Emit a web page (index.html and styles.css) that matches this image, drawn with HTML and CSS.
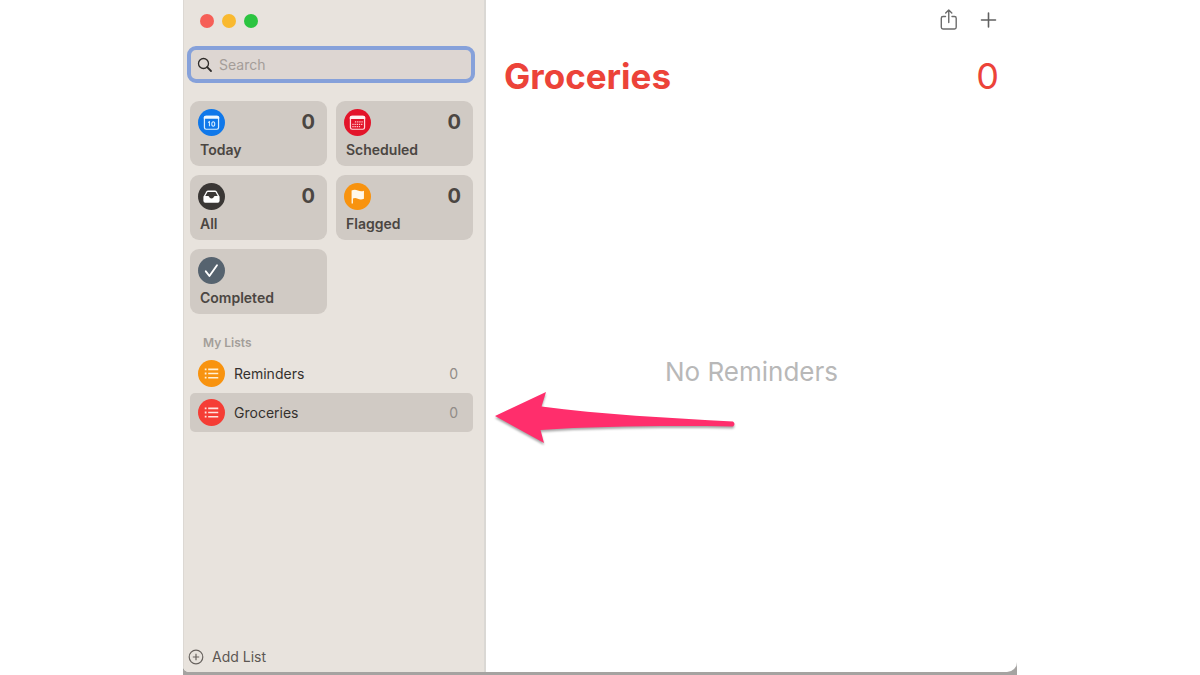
FILE: index.html
```
<!DOCTYPE html>
<html lang="en">
<head>
<meta charset="utf-8">
<title>Reminders</title>
<link rel="stylesheet" href="styles.css">
</head>
<body>
<div class="desktop">
<div class="window">
  <aside class="sidebar">
    <div class="lights">
      <button class="light light-close" aria-label="Close"></button>
      <button class="light light-min" aria-label="Minimize"></button>
      <button class="light light-zoom" aria-label="Zoom"></button>
    </div>
    <label class="search">
      <svg width="16" height="16" viewBox="0 0 16 16" fill="none" stroke="#2e2b29" aria-hidden="true"><circle cx="6.500" cy="6.500" r="5" stroke-width="1.300"/><path d="M10.200 10.200 14 14" stroke-width="1.800" stroke-linecap="round"/></svg>
      <input class="search-input" type="text" placeholder="Search" aria-label="Search">
    </label>
    <nav class="tiles">
      <button class="tile">
        <svg class="badge" viewBox="0 0 26 26" aria-hidden="true"><circle cx="13" cy="13" r="13" fill="#0f78ea"/><rect x="6.200" y="7" width="13.600" height="12.500" rx="1.600" fill="none" stroke="#d8eeff" stroke-width="1.200"/><path d="M5.600 9.500V8q0-1.600 1.600-1.600h11.600q1.600 0 1.600 1.600v1.500z" fill="#eef8ff"/><path d="M9.700 13l1.300-.8v4.500M14.700 12.300c-1.900 0-1.900 4.300 0 4.300s1.900-4.300 0-4.300z" fill="none" stroke="#d8eeff"/></svg>
        <span class="tile-count">0</span>
        <span class="tile-name">Today</span>
      </button>
      <button class="tile">
        <svg class="badge" viewBox="0 0 26 26" aria-hidden="true"><circle cx="13" cy="13" r="13" fill="#e3142a"/><rect x="6.200" y="7" width="13.600" height="12.500" rx="1.600" fill="none" stroke="#ffd9dc" stroke-width="1.200"/><path d="M5.600 9.600V8q0-1.600 1.600-1.600h11.600q1.600 0 1.600 1.600v1.600z" fill="#fff0f0"/><path d="M10.500 12.500h7.500M8 14.700h10M8 16.900h7.500" stroke="#ffc5ca" stroke-width="1.200" stroke-dasharray="1.300 .8"/></svg>
        <span class="tile-count">0</span>
        <span class="tile-name">Scheduled</span>
      </button>
      <button class="tile">
        <svg class="badge" viewBox="0 0 26 26" aria-hidden="true"><circle cx="13" cy="13" r="13" fill="#3a3735"/><path d="M5.200 13.200 8 8.200q.6-1 1.700-1h6.600q1.100 0 1.700 1l2.800 5v4q0 1.800-1.800 1.800H7q-1.800 0-1.800-1.800z" fill="#fff"/><path d="M7 12.400 9.200 8.700h7.600l2.200 3.700h-2.700q-.8 0-1 .9-.4 1.600-2.300 1.600t-2.300-1.600q-.2-.9-1-.9z" fill="#3a3735"/></svg>
        <span class="tile-count">0</span>
        <span class="tile-name">All</span>
      </button>
      <button class="tile">
        <svg class="badge" viewBox="0 0 26 26" aria-hidden="true"><circle cx="13" cy="13" r="13" fill="#f8930f"/><path d="M7.300 7.300q3-1.500 6 0 3 1.300 5.900.2v7.700q-3 1.200-5.900 0-2.600-1.200-4.700-.2v4.700H7.300z" fill="#fff8ea"/></svg>
        <span class="tile-count">0</span>
        <span class="tile-name">Flagged</span>
      </button>
      <button class="tile">
        <svg class="badge" viewBox="0 0 26 26" aria-hidden="true"><circle cx="13" cy="13" r="13" fill="#56636f"/><path d="M7.500 13.800 11 18.300 18.300 8" fill="none" stroke="#fff" stroke-width="1.800" stroke-linecap="round" stroke-linejoin="round"/></svg>
        <span class="tile-name">Completed</span>
      </button>
    </nav>
    <h2 class="lists-title">My Lists</h2>
    <nav class="lists">
      <button class="list">
        <svg class="badge" viewBox="0 0 26 26" aria-hidden="true"><circle cx="13" cy="13" r="13" fill="#f8930f"/><path d="M9.800 9h9.700M9.800 13h9.700M9.800 17h9.700" stroke="#fff0d5" stroke-width="1.500"/><path d="M6.500 9h1.700M6.500 13h1.700M6.500 17h1.700" stroke="#fff0d5" stroke-width="1.700"/></svg>
        <span class="list-name">Reminders</span>
        <span class="list-count">0</span>
      </button>
      <button class="list list-selected" aria-current="page">
        <svg class="badge" viewBox="0 0 26 26" aria-hidden="true"><circle cx="13" cy="13" r="13" fill="#f53d35"/><path d="M9.800 9h9.700M9.800 13h9.700M9.800 17h9.700" stroke="#ffe2de" stroke-width="1.500"/><path d="M6.500 9h1.700M6.500 13h1.700M6.500 17h1.700" stroke="#ffe2de" stroke-width="1.700"/></svg>
        <span class="list-name">Groceries</span>
        <span class="list-count">0</span>
      </button>
    </nav>
    <button class="add-list">
      <svg width="16" height="16" viewBox="0 0 16 16" fill="none" stroke="#68635f" stroke-width="1.200" aria-hidden="true"><circle cx="8" cy="8" r="6.800"/><path d="M8 4.800v6.400M4.800 8h6.400"/></svg>
      <span>Add List</span>
    </button>
  </aside>
  <main class="content">
    <div class="toolbar">
      <button class="tool" aria-label="Share"><svg width="20" height="24" viewBox="0 0 20 24" fill="none" stroke="#6c6c6c" stroke-width="1.400" stroke-linecap="round" stroke-linejoin="round" aria-hidden="true"><path d="M6.500 8.500H4q-1.700 0-1.700 1.700v9.100Q2.300 21 4 21h11.500q1.700 0 1.700-1.700v-9.100q0-1.700-1.700-1.700H13M9.750 14.500V2.200M6.700 5l3.050-3L12.800 5"/></svg></button>
      <button class="tool" aria-label="New reminder"><svg width="20" height="24" viewBox="0 0 20 24" fill="none" stroke="#606060" stroke-width="1.600" stroke-linecap="round" aria-hidden="true"><path d="M9.500 5v14M2.500 12h14"/></svg></button>
    </div>
    <header class="heading">
      <h1 class="title">Groceries</h1>
      <span class="total">0</span>
    </header>
    <p class="empty">No Reminders</p>
    <svg class="arrow" width="250" height="60" viewBox="0 0 250 60" aria-hidden="true"><path d="M5 29 56 5 51.500 19.500C110 27.500 180 31 243 34.500q3 2.500 0 5C180 38.500 110 39 50.500 43L54 56z" fill="#ff2e6c"/></svg>
  </main>
</div>
</div>
</body>
</html>
```
FILE: styles.css
```
* { box-sizing: border-box; }

body {
  margin: 0;
  background: #fff;
  font-family: Inter, "Liberation Sans", sans-serif;
  color: #4b4642;
}

button {
  border: 0;
  padding: 0;
  background: none;
  color: inherit;
  font: inherit;
  text-align: left;
}

.desktop {
  width: 69.5%;
  min-height: 100vh;
  margin: 0 auto;
  padding-bottom: 3px;
  display: flex;
  background: linear-gradient(#fff 96%, #a5a3a1 99%);
}

.window {
  flex: 1;
  display: grid;
  grid-template-columns: 303px 1fr;
  background: #fff;
  border-radius: 0 0 10px 6px;
  overflow: hidden;
}

.sidebar {
  display: flex;
  flex-direction: column;
  padding: 14px 11px 6px 6px;
  background: #e8e3dd;
  border-left: 1px solid #dcd8d3;
  border-right: 2px solid #dad8d4;
}

.lights {
  display: flex;
  gap: 8px;
  padding-left: 10px;
}

.light {
  width: 14px;
  height: 14px;
  border-radius: 50%;
}

.light-close { background: #f65f57; }
.light-min { background: #f9b92f; }
.light-zoom { background: #2bc440; }

.search {
  display: flex;
  align-items: center;
  gap: 6px;
  height: 37px;
  margin: 18px -2px 0 -3px;
  padding: 0 6px;
  border: 4px solid #86a1da;
  border-radius: 9px;
  background: #ddd6d2;
}

.search-input {
  flex: 1;
  min-width: 0;
  border: 0;
  padding: 0;
  outline: 0;
  background: none;
  font: 14px/20px Inter, "Liberation Sans", sans-serif;
}

.search-input::placeholder { color: #a49d99; }

.tiles {
  display: grid;
  grid-template-columns: 1fr 1fr;
  gap: 9px;
  margin-top: 18px;
}

.tile {
  display: grid;
  grid-template-columns: 1fr auto;
  align-content: start;
  row-gap: 5px;
  min-height: 65px;
  padding: 8px 12px 5px 8px;
  border-radius: 9px;
  background: #d0cac4;
}

.badge {
  display: block;
  width: 27px;
  height: 27px;
}

.tile-count {
  font-size: 20px;
  line-height: 27px;
  font-weight: 700;
}

.tile-name {
  grid-column: 1 / -1;
  padding-left: 2px;
  font-size: 14px;
  line-height: 18px;
  font-weight: 600;
}

.lists-title {
  margin: 20px 0 2px 13px;
  font-size: 12px;
  line-height: 18px;
  font-weight: 600;
  color: #a39e99;
}

.lists {
  display: flex;
  flex-direction: column;
}

.list {
  display: flex;
  align-items: center;
  gap: 9px;
  height: 39px;
  padding: 0 15px 0 8px;
  border-radius: 5px;
  font-size: 14px;
  font-weight: 400;
  color: #35312e;
}

.list-selected { background: #d0cac4; }

.list-name { flex: 1; }

.list-count { color: #918c88; }

.add-list {
  display: flex;
  align-items: center;
  gap: 8px;
  margin: auto 0 0 -2px;
  font-size: 14px;
  line-height: 18px;
  color: #5c5753;
}

.content {
  position: relative;
  display: flex;
  flex-direction: column;
  padding: 8px 18px 0;
}

.toolbar {
  display: flex;
  justify-content: flex-end;
  gap: 20px;
}

.tool svg { display: block; }

.heading {
  display: flex;
  justify-content: space-between;
  margin-top: 22px;
  font-size: 36px;
  line-height: 44px;
  color: #ec4339;
}

.title {
  margin: 0;
  font-size: 35px;
  font-weight: 700;
}

.total { font-weight: 400; }

.empty {
  margin: auto 0;
  padding-bottom: 26px;
  font-size: 26px;
  line-height: 32px;
  text-align: center;
  color: #b8b8b8;
}

.arrow {
  position: absolute;
  left: 4px;
  top: 387px;
  filter: drop-shadow(0 2px 1px rgba(0, 0, 0, 0.35));
}
```
